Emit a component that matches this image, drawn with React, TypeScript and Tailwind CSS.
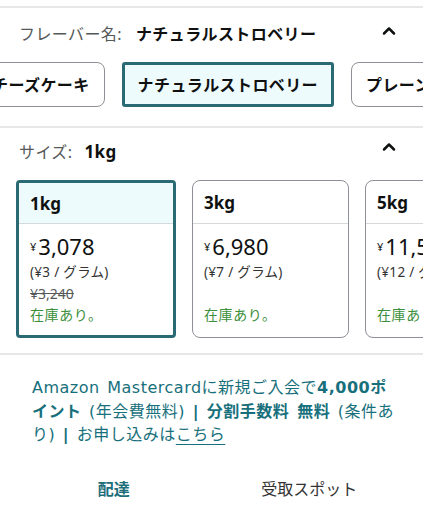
import React from 'react';
import { ChevronUp } from 'lucide-react';

const flavors = [
  { label: 'チーズケーキ', selected: false },
  { label: 'ナチュラルストロベリー', selected: true },
  { label: 'プレーン', selected: false },
];

const sizes = [
  { size: '1kg', price: '3,078', unit: '(¥3 / グラム)', list: '¥3,240', selected: true },
  { size: '3kg', price: '6,980', unit: '(¥7 / グラム)', list: '', selected: false },
  { size: '5kg', price: '11,580', unit: '(¥12 / グラム)', list: '', selected: false },
];

const Divider = () => <div className="h-[2px] w-full bg-[#e6e7e7]" />;

const App: React.FC = () => {
  return (
    <div className="w-[423px] h-[512px] overflow-hidden bg-white text-[#0f1111] font-['Noto_Sans','Noto_Sans_CJK_JP',sans-serif]">
      <div className="h-[6px]" />
      <Divider />

      {/* Flavor */}
      <div className="h-[52px] flex items-center pl-[19px] pr-[24px] text-[16px] tracking-[0.4px]">
        <span className="text-[#565959]">フレーバー名:</span>
        <span className="ml-[14px] font-bold">ナチュラルストロベリー</span>
        <ChevronUp className="ml-auto -mt-[6px] text-[#0f1111]" size={20} strokeWidth={3} />
      </div>
      <div className="mt-[2px] flex gap-[17px] ml-[-23px] h-[45px]">
        {flavors.map((f) => (
          <div
            key={f.label}
            className={
              f.selected
                ? 'shrink-0 h-full flex items-center px-[13px] border-[3px] border-[#2a6a74] bg-[#edfbfd] rounded-[3px] font-bold text-[16px] tracking-[0.4px]'
                : 'shrink-0 h-full flex items-center px-[14px] border border-[#8d9096] rounded-lg font-bold text-[16px] tracking-[0.4px]'
            }
          >
            {f.label}
          </div>
        ))}
      </div>
      <div className="h-[19px]" />
      <Divider />

      {/* Size */}
      <div className="h-[48px] flex items-center pl-[19px] pr-[24px] text-[16px] tracking-[0.4px]">
        <span className="text-[#565959]">サイズ:</span>
        <span className="ml-[12px] font-bold text-[17px]">1kg</span>
        <ChevronUp className="ml-auto -mt-[10px] text-[#0f1111]" size={20} strokeWidth={3} />
      </div>
      <div className="mt-[4px] flex gap-4 pl-4 h-[158px]">
        {sizes.map((s) => (
          <div
            key={s.size}
            className={
              s.selected
                ? 'shrink-0 w-[160px] h-full border-[3px] border-[#2a6a74] rounded-[4px] overflow-hidden flex flex-col'
                : 'shrink-0 w-[157px] h-full border border-[#8d9096] rounded-lg overflow-hidden flex flex-col'
            }
          >
            <div
              className={
                (s.selected ? 'bg-[#edfbfd] h-[41px]' : 'h-[43px]') +
                ' flex items-center pl-[11px] pt-[2px] font-bold text-[17px] border-b border-[#d5d9d9]'
              }
            >
              {s.size}
            </div>
            <div className="pl-[11px] pt-[11px] flex flex-col">
              <div className="h-[27px] flex items-start leading-none">
                <span className="text-[11px] mt-[6px] mr-[2px]">¥</span>
                <span className="text-[22px]">{s.price}</span>
              </div>
              <div className="h-[21px] text-[13.5px] text-[#333] leading-[21px] tracking-[0.3px]">{s.unit}</div>
              <div className="h-[21px] text-[14px] text-[#565959] line-through leading-[21px]">{s.list}</div>
              <div className="h-[22px] text-[14px] text-[#3c8f3c] leading-[22px] tracking-[0.6px]">在庫あり。</div>
            </div>
          </div>
        ))}
      </div>
      <div className="h-[15px]" />
      <Divider />

      {/* Promo */}
      <div className="pt-[21px] pl-[32px] pr-[25px] text-[16px] leading-[23.5px] tracking-[0.5px] [word-spacing:2px] text-[#17707c] font-['DejaVu_Sans','Noto_Sans_CJK_JP',sans-serif]">
        Amazon Mastercardに新規ご入会で<span className="font-bold">4,000ポイント</span> (年会費無料){' '}
        <span className="font-bold">|</span> <span className="font-bold">分割手数料 無料</span> (条件あり){' '}
        <span className="font-bold">|</span> お申し込みは<span className="underline underline-offset-4">こちら</span>
      </div>

      {/* Tabs */}
      <div className="mt-[30px] px-4 grid grid-cols-2 text-[16px]">
        <div className="text-center font-bold text-[#1e6f7b]">配達</div>
        <div className="text-center text-[#333]">受取スポット</div>
      </div>
    </div>
  );
};

export default App;
